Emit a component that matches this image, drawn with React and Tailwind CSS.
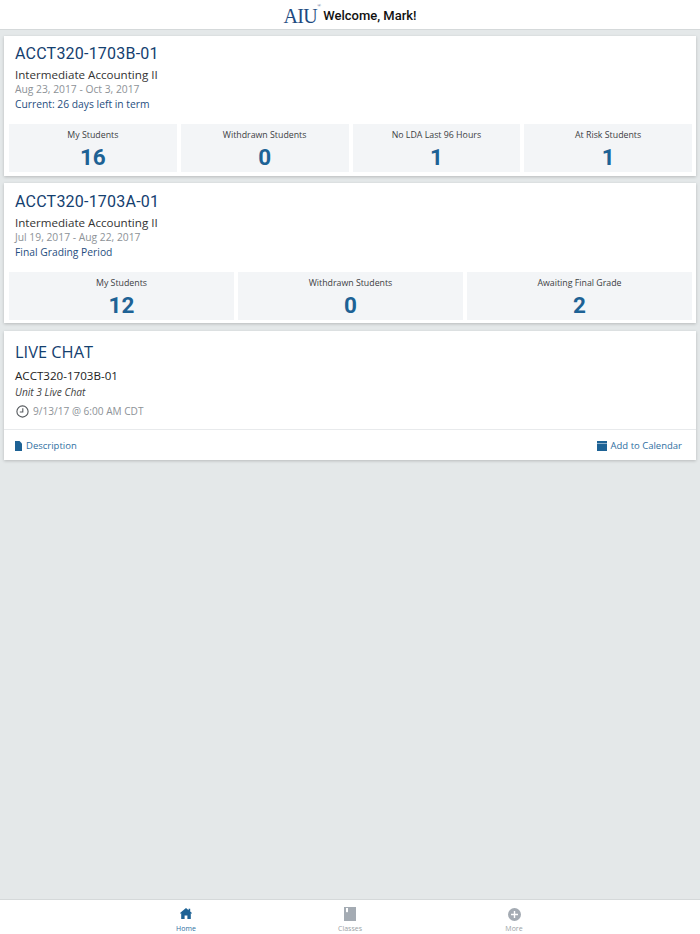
import React from "react";

const Stat = ({ label, value }) => (
  <div className="flex-1 h-[48px] bg-[#f3f5f7] flex flex-col items-center">
    <p className="text-[8.8px] leading-[12px] mt-[5px] text-[#3c4043]">{label}</p>
    <p className="font-['Roboto'] font-bold text-[22.5px] leading-[26px] mt-[3px] text-[#1d6295]">{value}</p>
  </div>
);

const CourseCard = ({ code, name, dates, status, stats, padding }) => (
  <div className={`bg-white shadow-[0_1px_3px_rgba(0,0,0,0.2)] pl-[5px] pr-[4px] ${padding}`}>
    <div className="px-[6px]">
      <h2 className="font-['Roboto'] font-normal text-[16px] leading-[24px] tracking-[0.22px] text-[#14406f]">{code}</h2>
      <p className="text-[11.6px] leading-[15px] mt-[1px] text-[#333]">{name}</p>
      <p className="text-[10.3px] leading-[15px] text-[#8d9297]">{dates}</p>
      <p className="text-[10.3px] leading-[15px] text-[#1f4e80]">{status}</p>
    </div>
    <div className="flex gap-[4px] mt-[12px]">
      {stats.map((s) => (
        <Stat key={s.label} label={s.label} value={s.value} />
      ))}
    </div>
  </div>
);

const App = () => {
  return (
    <div className="h-[934px] w-[700px] bg-[#e4e8e9] flex flex-col font-['Open_Sans',sans-serif]">
      {/* Header */}
      <div className="h-[30px] bg-white border-b border-[#d5d9da] flex items-center justify-center shrink-0">
        <span className="font-['Liberation_Serif',serif] text-[20px] leading-none tracking-[-0.6px] text-[#1d4a80] relative mt-[2px] pr-[6px]">
          AIU<sup className="text-[5px] absolute top-0">®</sup>
        </span>
        <span className="font-['Roboto'] font-medium text-[13px] text-[#111] mt-[2px]">Welcome, Mark!</span>
      </div>

      <div className="flex-1 px-[4px] pt-[6px] flex flex-col">
        <CourseCard
          padding="pt-[6px] pb-[4px]"
          code="ACCT320-1703B-01"
          name="Intermediate Accounting II"
          dates="Aug 23, 2017 - Oct 3, 2017"
          status="Current: 26 days left in term"
          stats={[
            { label: "My Students", value: "16" },
            { label: "Withdrawn Students", value: "0" },
            { label: "No LDA Last 96 Hours", value: "1" },
            { label: "At Risk Students", value: "1" },
          ]}
        />
        <div className="mt-[7px]">
          <CourseCard
            padding="pt-[7px] pb-[3px]"
            code="ACCT320-1703A-01"
            name="Intermediate Accounting II"
            dates="Jul 19, 2017 - Aug 22, 2017"
            status="Final Grading Period"
            stats={[
              { label: "My Students", value: "12" },
              { label: "Withdrawn Students", value: "0" },
              { label: "Awaiting Final Grade", value: "2" },
            ]}
          />
        </div>

        {/* Live chat */}
        <div className="bg-white shadow-[0_1px_3px_rgba(0,0,0,0.2)] mt-[8px]">
          <div className="px-[11px] pt-[10px] h-[99px] border-b border-[#e8eaec]">
            <h2 className="text-[16.4px] leading-[22px] text-[#14406f]">LIVE CHAT</h2>
            <p className="text-[11.6px] leading-[16px] mt-[5px] text-[#222]">ACCT320-1703B-01</p>
            <p className="text-[10.2px] leading-[14px] mt-[1px] italic text-[#444]">Unit 3 Live Chat</p>
            <div className="flex items-center gap-[4px] mt-[5px] pl-[1px]">
              <svg width="13" height="13" viewBox="0 0 13 13" fill="none" stroke="#55595d" strokeWidth="1.1">
                <circle cx="6.5" cy="6.5" r="5.6" />
                <path d="M6.8 3.2V7H3.8" />
              </svg>
              <span className="text-[10.1px] leading-[15px] text-[#8d9297]">9/13/17 @ 6:00 AM CDT</span>
            </div>
          </div>
          <div className="h-[30px] px-[11px] pr-[14px] pt-[2px] flex items-center justify-between text-[9.5px] text-[#2f6f9f]">
            <div className="flex items-center gap-[4px]">
              <svg width="7" height="10" viewBox="0 0 7 10" fill="#1d6295">
                <path d="M0 0H4.5L7 2.5V10H0Z" />
              </svg>
              <span>Description</span>
            </div>
            <div className="flex items-center gap-[4px]">
              <svg width="10" height="10" viewBox="0 0 10 10" fill="#1d6295">
                <path d="M0 0H10V2.2H0ZM0 2.8H10V10H0Z" />
              </svg>
              <span>Add to Calendar</span>
            </div>
          </div>
        </div>
      </div>

      {/* Tab bar */}
      <div className="h-[35px] bg-white border-t border-[#d5d9da] flex justify-center shrink-0">
        <div className="w-[164px] flex flex-col items-center pt-[8px]">
          <svg width="12" height="11" viewBox="0 0 12 11" fill="#1d6295">
            <path d="M6 0L8.6 2.2V0.8H10.2V3.5L12 5L11.4 5.7L10.8 5.3V11H7.4V7.6H4.6V11H1.2V5.3L0.6 5.7L0 5Z" />
          </svg>
          <span className="text-[7px] leading-[10px] mt-[5px] text-[#2f6f9f]">Home</span>
        </div>
        <div className="w-[164px] flex flex-col items-center pt-[7px]">
          <svg width="12" height="14" viewBox="0 0 12 14" fill="#a4abb3">
            <path d="M0 0H12V14H0ZM2 1V5.5L3 4.7L4 5.5V1Z" fillRule="evenodd" />
          </svg>
          <span className="text-[7px] leading-[10px] mt-[3px] text-[#9a9fa5]">Classes</span>
        </div>
        <div className="w-[164px] flex flex-col items-center pt-[8px]">
          <svg width="13" height="13" viewBox="0 0 13 13" fill="#a4abb3">
            <path d="M6.5 0a6.5 6.5 0 1 0 0 13a6.5 6.5 0 1 0 0-13ZM5.8 3H7.2V5.8H10V7.2H7.2V10H5.8V7.2H3V5.8H5.8Z" fillRule="evenodd" />
          </svg>
          <span className="text-[7px] leading-[10px] mt-[3px] text-[#9a9fa5]">More</span>
        </div>
      </div>
    </div>
  );
};

export default App;
